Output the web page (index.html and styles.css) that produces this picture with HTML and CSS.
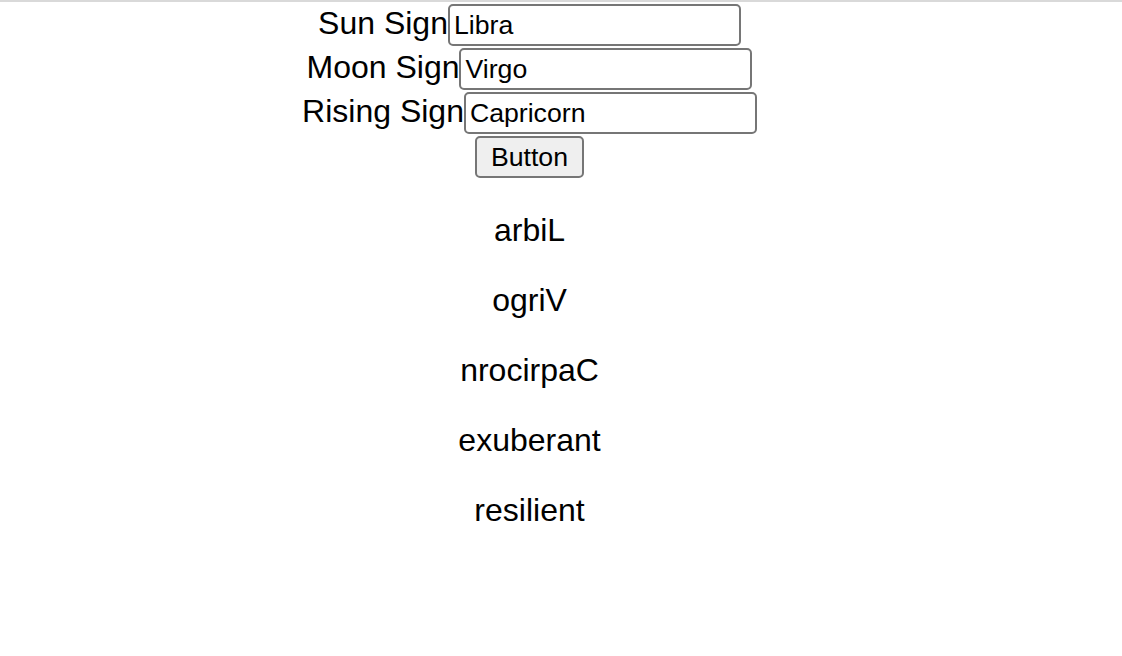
FILE: index.html
```html
<!DOCTYPE html>
<html lang="en">
<head>
    <meta charset="UTF-8">
    <meta name="viewport" content="width=device-width, initial-scale=1.0">
    <title>Signs</title>
    <link rel="stylesheet" href="styles.css">
</head>
<body>
    <div class="app">
        <div class="sign-row">
            <label class="sign-label" for="sun">Sun Sign</label>
            <input class="sign-input" id="sun" type="text" value="Libra">
        </div>
        <div class="sign-row">
            <label class="sign-label" for="moon">Moon Sign</label>
            <input class="sign-input" id="moon" type="text" value="Virgo">
        </div>
        <div class="sign-row">
            <label class="sign-label" for="rising">Rising Sign</label>
            <input class="sign-input" id="rising" type="text" value="Capricorn">
        </div>
        <div class="sign-row">
            <button class="go-button">Button</button>
        </div>
        <div class="results">
            <p class="result">arbiL</p>
            <p class="result">ogriV</p>
            <p class="result">nrocirpaC</p>
            <p class="result">exuberant</p>
            <p class="result">resilient</p>
        </div>
    </div>
</body>
</html>
```

FILE: styles.css
```css
body {
    margin: 0;
    font-family: "Liberation Sans", Arial, sans-serif;
    color: #000;
    background: #fff;
    border-top: 2px solid #d9d9d9;
}
.app {
    width: 1059px;
    padding-top: 2px;
    text-align: center;
}
.sign-row {
    display: flex;
    justify-content: center;
    align-items: baseline;
    margin-bottom: 2px;
}
.sign-label {
    font-size: 32px;
    line-height: 37px;
}
.sign-input {
    box-sizing: border-box;
    width: 293px;
    height: 42px;
    margin: 0;
    padding: 0 4px;
    font-family: "Liberation Sans", Arial, sans-serif;
    font-size: 26.67px;
    color: #000;
    border: 2px solid #767676;
    border-radius: 5px;
    background: #fff;
}
.go-button {
    box-sizing: border-box;
    height: 42px;
    width: 109px;
    margin: 0;
    padding: 0 12px;
    font-family: "Liberation Sans", Arial, sans-serif;
    font-size: 26.67px;
    color: #000;
    background: #efefef;
    border: 2px solid #767676;
    border-radius: 5px;
}
.result {
    margin: 33px 0;
    font-size: 32px;
    line-height: 37px;
}
.result:first-child {
    margin-top: 34px;
}
```
